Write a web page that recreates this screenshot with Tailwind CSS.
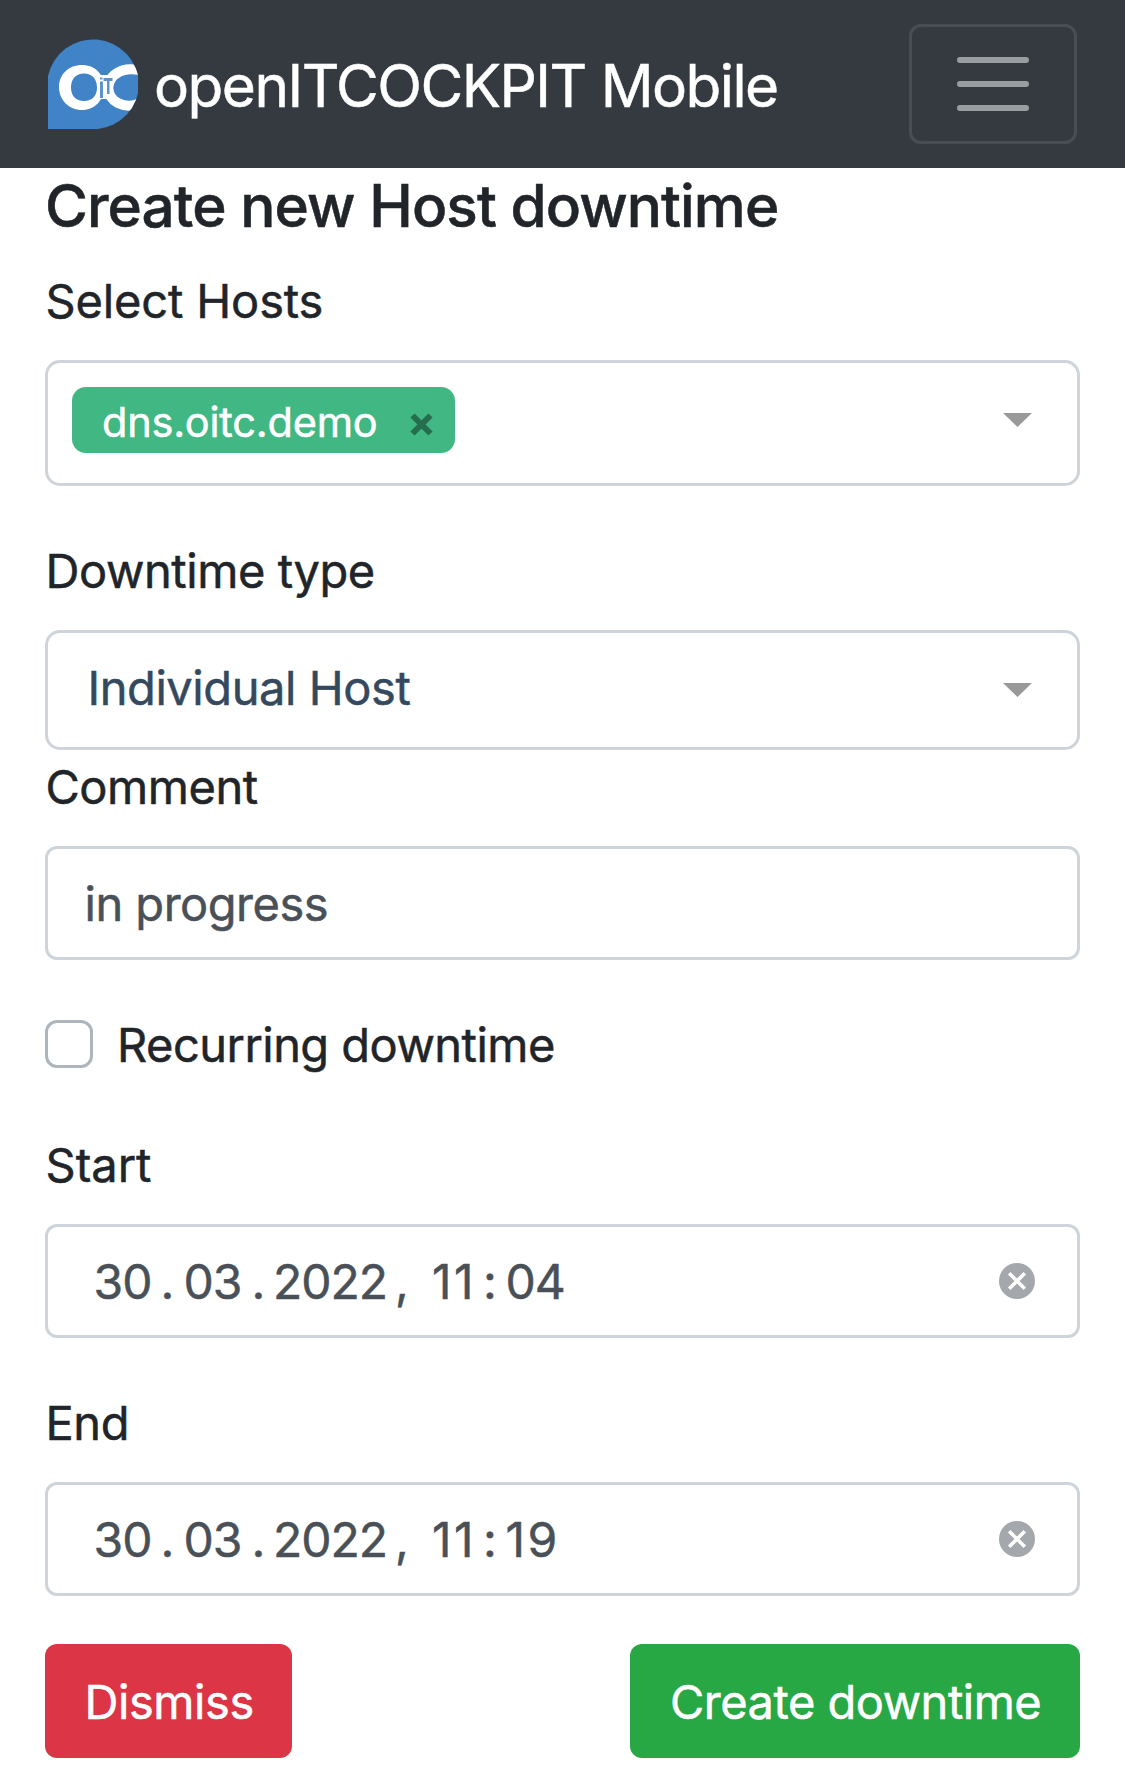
<!DOCTYPE html>
<html lang="en">
<head>
<meta charset="utf-8">
<title>openITCOCKPIT Mobile</title>
<script src="https://cdn.jsdelivr.net/npm/@tailwindcss/browser@4"></script>
</head>
<body class="min-h-[1773px] bg-white font-['Inter','Liberation_Sans',sans-serif] text-[47px] leading-[72px] text-[#212529] [-webkit-text-stroke:0.5px]">
<nav class="flex h-[168px] items-center bg-[#343a40] pr-12 pl-12 text-white">
  <svg class="size-[90px] shrink-0" viewBox="0 0 90 90">
    <defs><clipPath id="drop"><path d="M0 90V37A46 46 0 0 1 91 45A46 46 0 0 1 50 90Z"/></clipPath></defs>
    <g clip-path="url(#drop)">
      <rect width="90" height="90" fill="#4083c6"/>
      <path fill="#fff" fill-rule="evenodd" d="M34 26c13 0 22 9 22 22s-9 23-22 23S11 61 11 48s10-22 23-22zM36 34.500c-8 0-13 5.500-13 14S28 62 36 62s13-5 13-13.500S44 34.500 36 34.500z"/>
      <path fill="none" stroke="#fff" stroke-width="10" d="M92 31.500C86 29.500 77 29.500 71 33C57 40 57 57 70 64C77 67.500 85 67.500 92 64"/>
      <path fill="#fff" d="M53 36h11v24h-11z"/>
      <path fill="#4083c6" fill-opacity=".85" d="M52 42.500h3V59h-3zM55.500 39h9v3h-3v13h-2.500V42h-3.500zM52 38.500h2.500v2H52z"/>
    </g>
  </svg>
  <span class="ml-[16px] pt-[3px] text-[58.5px] tracking-[-1.53px] whitespace-nowrap">openITCOCKPIT Mobile</span>
  <button class="ml-auto flex h-[120px] w-[168px] flex-col items-center justify-center gap-[18px] rounded-xl border-3 border-white/10" aria-label="Toggle navigation">
    <span class="h-[6px] w-[72px] rounded-full bg-[#9a9da0]"></span>
    <span class="h-[6px] w-[72px] rounded-full bg-[#9a9da0]"></span>
    <span class="h-[6px] w-[72px] rounded-full bg-[#9a9da0]"></span>
  </button>
</nav>
<main class="flex flex-col px-[45px] whitespace-nowrap">
  <h1 class="mt-[2px] text-[58.5px] font-medium tracking-[-0.93px]">Create new Host downtime</h1>

  <label class="mt-[23px] pl-[0.5px] tracking-[-0.14px]">Select Hosts</label>
  <div class="mt-[23px] flex h-[126px] items-start justify-between rounded-[15px] border-3 border-[#ced4da] pt-[24px] pr-[45.5px] pl-[24px]">
    <span class="flex h-[66px] w-[383px] items-center rounded-[14px] bg-[#41b883] pl-[30px] text-[41.5px] tracking-[-0.23px] text-white">
      <span class="pt-[3px]">dns.oitc.demo</span>
      <svg class="mt-[9px] ml-[33px] size-[23px]" viewBox="0 0 23 23"><path d="M2.500 2.500l18 18m0-18l-18 18" stroke="#266d4d" stroke-width="6"/></svg>
    </span>
    <svg class="mt-[26px] h-[14px] w-[29px]" viewBox="0 0 29 14"><path d="M0 0h29L14.500 14z" fill="#999"/></svg>
  </div>

  <label class="mt-[49px] pl-[0.5px] tracking-[-0.43px]">Downtime type</label>
  <div class="mt-[23px] flex h-[120px] items-center justify-between rounded-[15px] border-3 border-[#ced4da] pr-[45.5px] pb-[4px] pl-[39.5px]">
    <span class="tracking-[-0.42px] text-[#34495e]">Individual Host</span>
    <svg class="mt-[4px] h-[14px] w-[29px]" viewBox="0 0 29 14"><path d="M0 0h29L14.500 14z" fill="#999"/></svg>
  </div>

  <label class="mt-px pl-[0.5px] tracking-[-0.47px]">Comment</label>
  <div class="mt-[23px] flex h-[114px] items-center rounded-xl border-3 border-[#ced4da] pt-[2px] pl-[36.5px] tracking-[-0.5px] text-[#495057]">in progress</div>

  <label class="mt-[49px] flex items-center tracking-[-0.53px]">
    <span class="mb-[2px] size-12 rounded-xl border-3 border-[#adb5bd]"></span>
    <span class="ml-[24px]">Recurring downtime</span>
  </label>

  <label class="mt-[48px] pl-[0.5px]">Start</label>
  <div class="mt-[23px] flex h-[114px] items-center rounded-xl border-3 border-[#ced4da] pr-[42px] pl-[45.5px] text-[#495057]">
    <div class="flex pt-[2px] text-[48px] tracking-[-1px]">
      <span class="w-[67px]">30</span><span class="w-[23px]">.</span><span class="w-[68px]">03</span><span class="w-[21.5px]">.</span><span class="w-[122px]">2022</span><span class="w-[37px]">,</span><span class="w-[51px] tracking-[2.5px]">11</span><span class="w-[22.5px]">:</span><span>04</span>
    </div>
    <svg class="ml-auto size-9" viewBox="0 0 36 36"><circle cx="18" cy="18" r="18" fill="#a4a7ab"/><path d="M10.200 10.200l15.600 15.600m0-15.600l-15.600 15.600" stroke="#fff" stroke-width="3.600"/></svg>
  </div>

  <label class="mt-[49px] pl-[0.5px] tracking-[-0.4px]">End</label>
  <div class="mt-[23px] flex h-[114px] items-center rounded-xl border-3 border-[#ced4da] pr-[42px] pl-[45.5px] text-[#495057]">
    <div class="flex pt-[2px] text-[48px] tracking-[-1px]">
      <span class="w-[67px]">30</span><span class="w-[23px]">.</span><span class="w-[68px]">03</span><span class="w-[21.5px]">.</span><span class="w-[122px]">2022</span><span class="w-[37px]">,</span><span class="w-[51px] tracking-[2.5px]">11</span><span class="w-[22.5px]">:</span><span class="tracking-[2.5px]">19</span>
    </div>
    <svg class="ml-auto size-9" viewBox="0 0 36 36"><circle cx="18" cy="18" r="18" fill="#a4a7ab"/><path d="M10.200 10.200l15.600 15.600m0-15.600l-15.600 15.600" stroke="#fff" stroke-width="3.600"/></svg>
  </div>

  <div class="mt-[48px] flex justify-between text-white">
    <button class="flex h-[114px] w-[247px] items-center rounded-xl bg-[#dc3545] pt-[2px] pl-[39.5px] tracking-[-0.43px]">Dismiss</button>
    <button class="flex h-[114px] w-[450px] items-center rounded-xl bg-[#28a745] pt-[2px] pl-[40px] tracking-[-0.5px]">Create downtime</button>
  </div>
</main>
</body>
</html>
